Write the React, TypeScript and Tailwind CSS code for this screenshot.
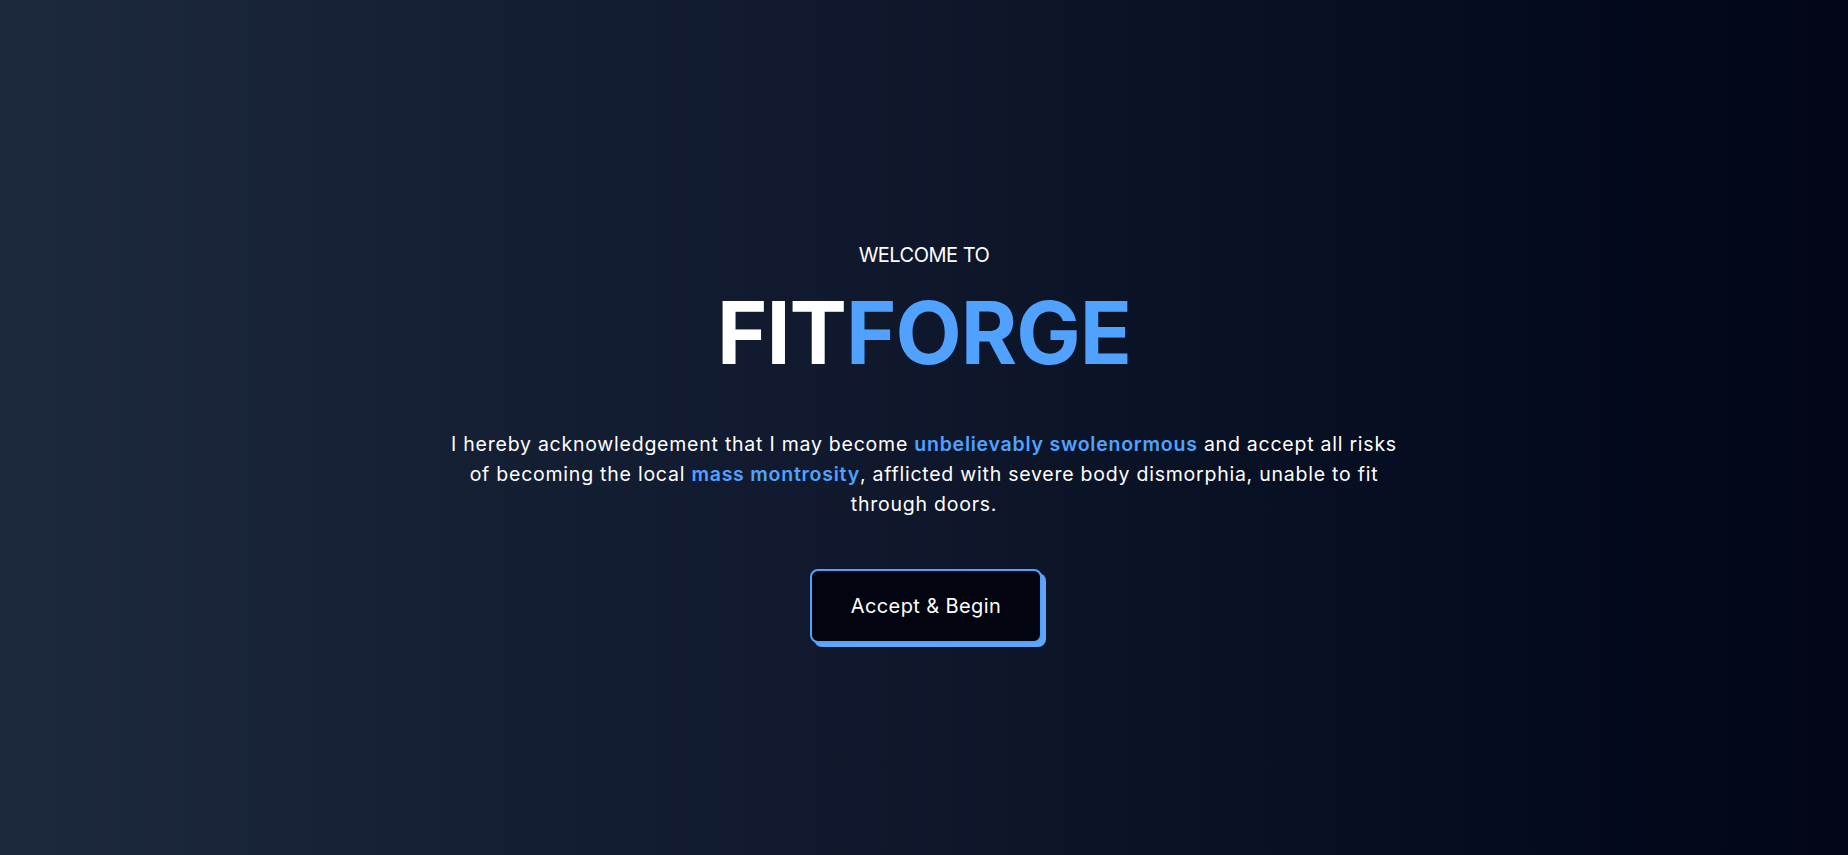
const App = () => {
  return (
    <div
      className="min-h-screen w-full bg-gradient-to-r from-slate-800 via-slate-900 to-slate-950 flex flex-col items-center pt-[241px] text-white"
      style={{ fontFamily: '"Inter", "Open Sans", sans-serif' }}
    >
      <div className="flex flex-col items-center text-center">
        {/* Heading */}
        <p className="text-xl leading-7 tracking-tight">WELCOME TO</p>
        <h1 className="mt-[21px] text-[86px] leading-none font-bold tracking-[-1px]">
          FIT<span className="text-blue-400">FORGE</span>
        </h1>

        {/* Disclaimer */}
        <p className="mt-[53px] w-[1000px] text-[19.5px] leading-[30px] tracking-[0.76px] text-white">
          I hereby acknowledgement that I may become{' '}
          <span className="font-semibold text-blue-400">unbelievably swolenormous</span> and accept all risks
          <br />
          of becoming the local <span className="font-semibold text-blue-400">mass montrosity</span>, afflicted with
          severe body dismorphia, unable to fit
          <br />
          through doors.
        </p>

        <button className="mt-[50px] ml-[4px] px-[39px] py-[21px] text-xl leading-7 font-normal tracking-[0.4px] text-white bg-[#02040f] border-2 border-blue-400 rounded-lg shadow-[4px_4px_0_0_#60a5fa]">
          Accept &amp; Begin
        </button>
      </div>
    </div>
  );
};

export default App;
